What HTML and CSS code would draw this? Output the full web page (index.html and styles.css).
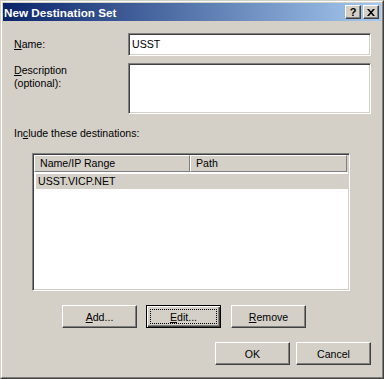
FILE: index.html
```html
<!DOCTYPE html>
<html>

<head>
    <title>New Destination Set</title>
    <link rel="stylesheet" href="styles.css">
</head>

<body>
    <div class="window">
        <div class="window-inner">
            <div class="titlebar">
                <span class="title">New Destination Set</span>
                <div class="title-buttons">
                    <span class="tbtn help">?</span>
                    <span class="tbtn close">
                        <svg width="8" height="7" viewBox="0 0 8 7">
                            <path d="M0 0h2l2 2.2L6 0h2L5 3.5 8 7H6L4 4.8 2 7H0l3-3.5z" fill="#000"/>
                        </svg>
                    </span>
                </div>
            </div>

            <div class="content">
                <div class="form-grid">
                    <label class="label name-label"><u>N</u>ame:</label>
                    <div class="field input">USST</div>

                    <label class="label desc-label"><u>D</u>escription<br>(optional):</label>
                    <div class="field textarea"></div>
                </div>

                <div class="label include-label">In<u>c</u>lude these destinations:</div>

                <div class="listview">
                    <div class="list-header">
                        <div class="col col-name">Name/IP Range</div>
                        <div class="col col-path">Path</div>
                        <div class="col col-fill"></div>
                    </div>
                    <div class="list-row selected">USST.VICP.NET</div>
                </div>

                <div class="button-row list-buttons">
                    <button class="btn btn-add"><u>A</u>dd...</button>
                    <button class="btn btn-edit focused"><u>E</u>dit...</button>
                    <button class="btn btn-remove"><u>R</u>emove</button>
                </div>

                <div class="button-row dialog-buttons">
                    <button class="btn">OK</button>
                    <button class="btn">Cancel</button>
                </div>
            </div>
        </div>
    </div>
</body>

</html>
```

FILE: styles.css
```css
html,
body {
    margin: 0;
    padding: 0;
    overflow: hidden;
}

body {
    font-family: "Liberation Sans", Arial, sans-serif;
    font-size: 10.6px;
    color: #000;
    background: #d4d0c8;
}

.window {
    width: 384px;
    height: 379px;
    box-sizing: border-box;
    border: 1px solid;
    border-color: #d4d0c8 #404040 #404040 #d4d0c8;
}

.window-inner {
    height: 100%;
    box-sizing: border-box;
    border: 1px solid;
    border-color: #fff #808080 #808080 #fff;
    padding: 1px;
    background: #d4d0c8;
}

/* title bar */
.titlebar {
    height: 18px;
    display: flex;
    align-items: center;
    justify-content: space-between;
    background: linear-gradient(to right, #0a246a, #a6caf0);
    padding: 0 2px 0 1px;
}

.title {
    color: #fff;
    font-weight: bold;
    font-size: 11.7px;
    line-height: 13px;
}

.title-buttons {
    display: flex;
    gap: 2px;
}

.tbtn {
    width: 16px;
    height: 14px;
    box-sizing: border-box;
    display: flex;
    align-items: center;
    justify-content: center;
    background: #d4d0c8;
    border: 1px solid;
    border-color: #fff #404040 #404040 #fff;
    box-shadow: inset -1px -1px #808080;
}

.help {
    font-weight: bold;
    font-size: 11px;
    line-height: 11px;
    padding-top: 1px;
}

.close svg {
    display: block;
}

/* body */
.content {
    padding: 12px 10px 0 11px;
}

.form-grid {
    display: grid;
    grid-template-columns: 114px 243px;
    grid-template-rows: 23px 51px;
    row-gap: 7px;
}

.label {
    line-height: 13px;
}

.name-label {
    padding-top: 5px;
}

.desc-label {
    padding-top: 1px;
}

.field {
    box-sizing: border-box;
    background: #fff;
    border: 1px solid;
    border-color: #808080 #fff #fff #808080;
    box-shadow: inset 1px 1px #404040, inset -1px -1px #d4d0c8;
}

.input {
    padding: 4px 3px 0;
    line-height: 13px;
}

.include-label {
    margin-top: 13px;
}

/* list view */
.listview {
    margin: 13px 0 0 18px;
    width: 318px;
    height: 138px;
    box-sizing: border-box;
    background: #fff;
    border: 1px solid;
    border-color: #808080 #fff #fff #808080;
    box-shadow: inset 1px 1px #404040, inset -1px -1px #d4d0c8;
    padding: 1px;
}

.list-header {
    display: flex;
    height: 17px;
}

.col {
    box-sizing: border-box;
    background: #d4d0c8;
    border: 1px solid;
    border-color: #fff #808080 #808080 #fff;
    line-height: 14px;
    padding-left: 5px;
}

.col-name {
    width: 156px;
}

.col-path {
    width: 157px;
}

.col-fill {
    flex: 1;
    border: none;
    padding: 0;
}

.list-row {
    margin: 2px 0 0 2px;
    height: 15px;
    line-height: 15px;
    padding-left: 2px;
}

.selected {
    background: #d4d0c8;
}

/* buttons */
.button-row {
    display: flex;
}

.list-buttons {
    margin-top: 14px;
    padding-left: 48px;
}

.btn-edit {
    margin-left: 9px;
}

.btn-remove {
    margin-left: 10px;
}

.dialog-buttons {
    margin-top: 14px;
    justify-content: flex-end;
    gap: 6px;
}

.btn {
    position: relative;
    width: 75px;
    height: 23px;
    box-sizing: border-box;
    margin-top: 0;
    padding: 0;
    font-family: "Liberation Sans", Arial, sans-serif;
    font-size: 10.6px;
    color: #000;
    background: #d4d0c8;
    border: 1px solid;
    border-color: #fff #404040 #404040 #fff;
    box-shadow: inset -1px -1px #808080;
    border-radius: 0;
}

.btn.focused {
    border-color: #000;
    box-shadow: inset 1px 1px #fff, inset -1px -1px #404040, inset -2px -2px #808080;
}

.btn.focused::after {
    content: "";
    position: absolute;
    left: 3px;
    top: 3px;
    right: 3px;
    bottom: 3px;
    border: 1px dotted #000;
}
```
